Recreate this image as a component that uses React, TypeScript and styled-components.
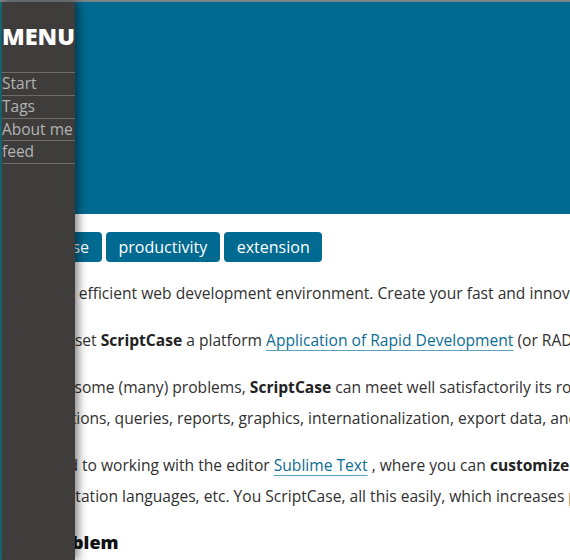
import React from 'react';
import styled, { createGlobalStyle } from 'styled-components';

const GlobalStyle = createGlobalStyle`
    html, body {
        margin: 0;
        padding: 0;
        background: #ffffff;
    }
    body {
        font-family: 'Open Sans', 'Noto Sans', 'DejaVu Sans', sans-serif;
    }
`;

const menuItems = ['Start', 'Tags', 'About me', 'feed'];
const tags = ['scriptcase', 'productivity', 'extension'];

export default function App() {
    return (
        <>
            <GlobalStyle />
            <Page>
                <TopEdge />
                <Frame>
                    <SideEdge />
                    <Main>
                        <Header />
                        <Article>
                            <TagList>
                                {tags.map((t) => (
                                    <Tag key={t} href="#">
                                        {t}
                                    </Tag>
                                ))}
                            </TagList>
                            <Para>
                                A fast and efficient web development environment. Create your fast and innovative
                                applications in a few minutes.
                            </Para>
                            <Para>
                                Today we set <b>ScriptCase</b> a platform{' '}
                                <Link href="#">Application of Rapid Development</Link> (or RAD, Rapid Application
                                Development) based on PHP.
                            </Para>
                            <Para>
                                In solving some (many) problems, <b>ScriptCase</b> can meet well satisfactorily its
                                role, generating forms,
                                <br />
                                configurations, queries, reports, graphics, internationalization, export data, and much
                                more.
                            </Para>
                            <Para>
                                I was used to working with the editor <Link href="#">Sublime Text</Link> , where you can{' '}
                                <b>customize</b> everything: shortcuts, snippets, themes,
                                <br />
                                implementation languages, etc. You ScriptCase, all this easily, which increases
                                productivity.
                            </Para>
                            <Heading>The problem</Heading>
                        </Article>
                    </Main>
                </Frame>
                <Sidebar>
                    <MenuTitle>MENU</MenuTitle>
                    <MenuList>
                        {menuItems.map((m) => (
                            <MenuItem key={m}>
                                <MenuLink href="#">{m}</MenuLink>
                            </MenuItem>
                        ))}
                    </MenuList>
                </Sidebar>
            </Page>
        </>
    );
}

const Page = styled.div`
    position: relative;
    width: 570px;
    height: 560px;
    overflow: hidden;
    display: flex;
    flex-direction: column;
    background: #ffffff;
`;

const TopEdge = styled.div`
    height: 2px;
    flex: none;
    background: #7c8588;
`;

const Frame = styled.div`
    flex: 1;
    display: flex;
    min-height: 0;
`;

const SideEdge = styled.div`
    width: 2px;
    flex: none;
    background: #1b6d77;
`;

const Main = styled.div`
    flex: 1;
    min-width: 0;
    display: flex;
    flex-direction: column;
`;

const Header = styled.header`
    height: 212px;
    flex: none;
    background: #006a90;
`;

const Article = styled.article`
    width: 1000px;
    padding-top: 18px;
    color: #303030;
    font-size: 15.6px;
    line-height: 31px;
    white-space: nowrap;

    b {
        font-weight: 700;
        color: #222222;
    }
`;

const TagList = styled.div`
    display: flex;
    gap: 4.5px;
    margin-bottom: 16px;
`;

const Tag = styled.a`
    display: block;
    height: 30px;
    padding: 0 12.5px;
    border-radius: 4px;
    background: #006a90;
    color: #ffffff;
    font-size: 16px;
    line-height: 30px;
    text-decoration: none;
`;

const Para = styled.p`
    margin: 0 0 16px;
`;

const Link = styled.a`
    color: #0b6c94;
    text-decoration: underline;
    text-decoration-color: #5aa2c4;
    text-decoration-thickness: 1px;
    text-underline-offset: 4px;
`;

const Heading = styled.h2`
    margin: 18px 0 0;
    font-size: 18px;
    line-height: 24px;
    font-weight: 800;
    color: #111111;
`;

const Sidebar = styled.nav`
    position: absolute;
    left: 2px;
    top: 2px;
    bottom: 0;
    width: 73px;
    padding-top: 22px;
    box-sizing: border-box;
    background: #3e3d3c;
    box-shadow: 3px 0 9px rgba(0, 0, 0, 0.5);
    z-index: 2;
`;

const MenuTitle = styled.h1`
    margin: 0 0 24px;
    font-size: 23.5px;
    line-height: 24px;
    font-weight: 800;
    color: #ffffff;
    white-space: nowrap;
`;

const MenuList = styled.ul`
    list-style: none;
    margin: 0;
    padding: 0;
    border-top: 1px solid #6c6b6a;
`;

const MenuItem = styled.li`
    border-bottom: 1px solid #6c6b6a;
`;

const MenuLink = styled.a`
    display: block;
    height: 21.75px;
    font-size: 15.5px;
    line-height: 21.75px;
    font-weight: 400;
    color: #b3b3b3;
    text-decoration: none;
    white-space: nowrap;
`;
